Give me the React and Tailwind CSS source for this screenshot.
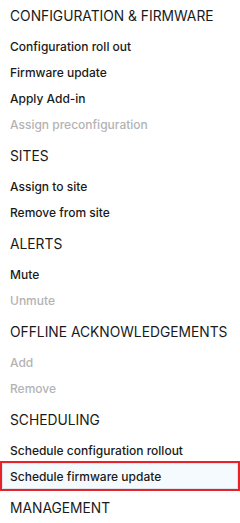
const sections = [
  {
    title: "CONFIGURATION & FIRMWARE",
    items: [
      { label: "Configuration roll out" },
      { label: "Firmware update" },
      { label: "Apply Add-in" },
      { label: "Assign preconfiguration", disabled: true },
    ],
  },
  {
    title: "SITES",
    items: [{ label: "Assign to site" }, { label: "Remove from site" }],
  },
  {
    title: "ALERTS",
    items: [{ label: "Mute" }, { label: "Unmute", disabled: true }],
  },
  {
    title: "OFFLINE ACKNOWLEDGEMENTS",
    items: [
      { label: "Add", disabled: true },
      { label: "Remove", disabled: true },
    ],
  },
  {
    title: "SCHEDULING",
    items: [
      { label: "Schedule configuration rollout" },
      { label: "Schedule firmware update", active: true },
    ],
  },
  { title: "MANAGEMENT", items: [] },
];

const MenuItem = ({ label, disabled, active }) => {
  if (active) {
    return (
      <div className="-my-[2px] h-[30px] border-2 border-[#e5232b]">
        <div className="flex h-full items-center border border-[#dfe5ec] bg-[#f5faff] pl-[7px] pt-[2px] text-[12px] font-medium text-[#1a1a1a]">
          {label}
        </div>
      </div>
    );
  }
  return (
    <div
      className={`flex h-[26px] items-center px-[10px] pt-[2px] text-[12px] font-medium whitespace-nowrap ${
        disabled ? "text-[#b3b3b3]" : "text-[#1a1a1a]"
      }`}
    >
      {label}
    </div>
  );
};

export default function App() {
  return (
    <div
      className="w-[240px] h-[523px] overflow-hidden bg-white"
      style={{ fontFamily: "Inter, 'Noto Sans', sans-serif" }}
    >
      <div className="-mt-[3px]">
        {sections.map((section) => (
          <div key={section.title}>
            <div className="flex h-[36px] items-center whitespace-nowrap px-[10px] pt-[2px] text-[13.8px] text-[#1a1a1a]">
              {section.title}
            </div>
            {section.items.map((item) => (
              <MenuItem key={item.label} {...item} />
            ))}
          </div>
        ))}
      </div>
    </div>
  );
}
